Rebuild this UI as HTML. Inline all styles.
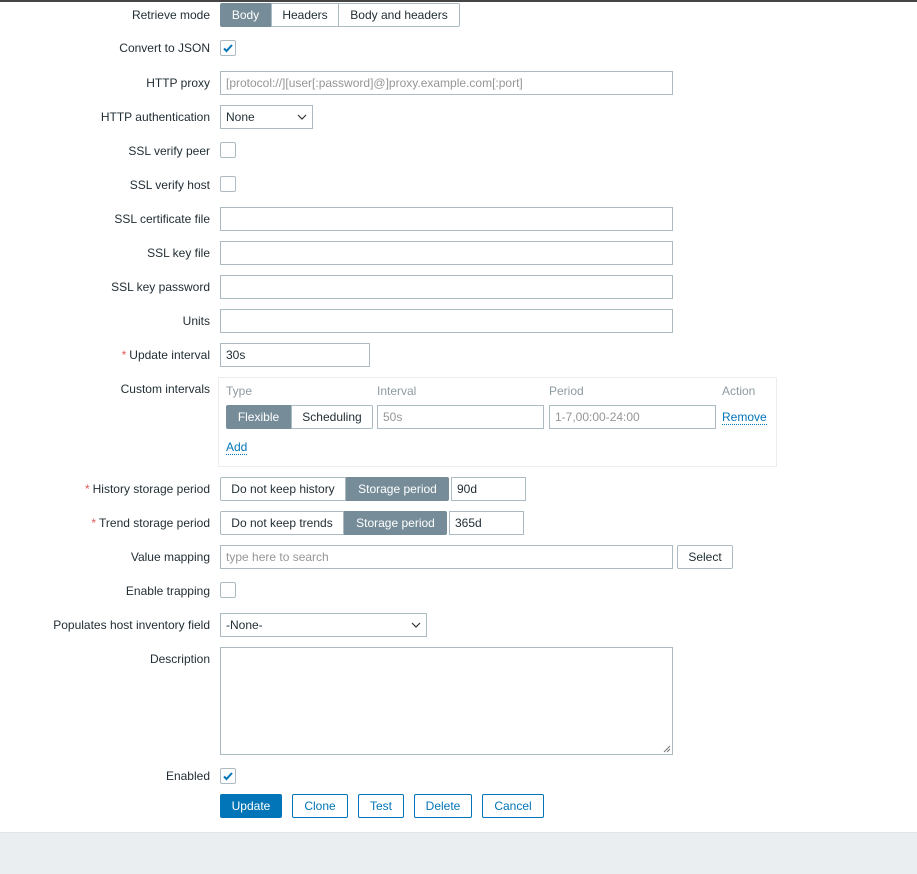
<!DOCTYPE html>
<html><head><meta charset="utf-8"><style>
*{box-sizing:border-box;margin:0;padding:0}
body{width:917px;height:874px;position:relative;background:#fff;font-family:"Liberation Sans",Arial,sans-serif;font-size:12px;color:#1f2c33;overflow:hidden}
.a{position:absolute}
.lbl{position:absolute;right:707px;white-space:nowrap;line-height:14px}
.req{color:#e45959;margin-right:3px}
.inp{position:absolute;height:24px;border:1px solid #acbbc2;background:#fff;padding:0 5px;line-height:22px;white-space:nowrap;overflow:hidden}
.ph{color:#969696}
.cb{position:absolute;left:220px;width:16px;height:16px;border:1px solid #acbbc2;border-radius:2px;background:#fff}
.cb svg{position:absolute;left:1px;top:1px}
.seg{position:absolute;height:24px;border:1px solid #acbbc2;background:#fff;text-align:center;line-height:22px;white-space:nowrap}
.on{background:#768d99;border-color:#768d99;color:#fff}
.btn{position:absolute;top:794px;height:24px;border:1px solid #0275b8;border-radius:2px;color:#0275b8;text-align:center;line-height:22px;background:#fff}
.lnk{color:#0275b8;border-bottom:1px dotted #0275b8}
.hd{position:absolute;top:384px;color:#8d9ba2}
</style></head><body>
<div class="a" style="left:0;top:0;width:917px;height:2px;background:#454545"></div>

<div class="lbl" style="top:8px">Retrieve mode</div>
<div class="seg on" style="left:220px;top:3px;width:51px;border-radius:2px 0 0 2px">Body</div>
<div class="seg" style="left:271px;top:3px;width:68px">Headers</div>
<div class="seg" style="left:338px;top:3px;width:122px;border-radius:0 2px 2px 0">Body and headers</div>

<div class="lbl" style="top:41px">Convert to JSON</div>
<div class="cb" style="top:40px"><svg width="12" height="12" viewBox="0 0 12 12"><path d="M2 6.5l2.5 2.5 5.5-6" stroke="#0275b8" stroke-width="2" fill="none"/></svg></div>

<div class="lbl" style="top:76px">HTTP proxy</div>
<div class="inp ph" style="left:220px;top:71px;width:453px">[protocol://][user[:password]@]proxy.example.com[:port]</div>

<div class="lbl" style="top:110px">HTTP authentication</div>
<div class="inp" style="left:220px;top:105px;width:93px">None<svg class="a" style="left:76px;top:8px" width="10" height="7" viewBox="0 0 10 7"><path d="M1 1l4 4 4-4" stroke="#333" stroke-width="1.2" fill="none"/></svg></div>

<div class="lbl" style="top:144px">SSL verify peer</div>
<div class="cb" style="top:142px"></div>
<div class="lbl" style="top:178px">SSL verify host</div>
<div class="cb" style="top:176px"></div>

<div class="lbl" style="top:212px">SSL certificate file</div>
<div class="inp" style="left:220px;top:207px;width:453px"></div>
<div class="lbl" style="top:246px">SSL key file</div>
<div class="inp" style="left:220px;top:241px;width:453px"></div>
<div class="lbl" style="top:280px">SSL key password</div>
<div class="inp" style="left:220px;top:275px;width:453px"></div>
<div class="lbl" style="top:314px">Units</div>
<div class="inp" style="left:220px;top:309px;width:453px"></div>

<div class="lbl" style="top:348px"><span class="req">*</span>Update interval</div>
<div class="inp" style="left:220px;top:343px;width:150px">30s</div>

<div class="lbl" style="top:382px">Custom intervals</div>
<div class="a" style="left:218px;top:377px;width:559px;height:90px;border:1px solid #ebeef0"></div>
<div class="hd" style="left:226px">Type</div>
<div class="hd" style="left:377px">Interval</div>
<div class="hd" style="left:549px">Period</div>
<div class="hd" style="left:722px">Action</div>
<div class="seg on" style="left:226px;top:405px;width:65px;border-radius:2px 0 0 2px">Flexible</div>
<div class="seg" style="left:291px;top:405px;width:82px;border-radius:0 2px 2px 0">Scheduling</div>
<div class="inp ph" style="left:377px;top:405px;width:167px">50s</div>
<div class="inp ph" style="left:549px;top:405px;width:167px">1-7,00:00-24:00</div>
<div class="a" style="left:722px;top:410px"><span class="lnk">Remove</span></div>
<div class="a" style="left:226px;top:440px"><span class="lnk">Add</span></div>

<div class="lbl" style="top:482px"><span class="req">*</span>History storage period</div>
<div class="seg" style="left:220px;top:477px;width:126px;border-radius:2px 0 0 2px">Do not keep history</div>
<div class="seg on" style="left:346px;top:477px;width:103px;border-radius:0 2px 2px 0">Storage period</div>
<div class="inp" style="left:451px;top:477px;width:75px">90d</div>

<div class="lbl" style="top:516px"><span class="req">*</span>Trend storage period</div>
<div class="seg" style="left:220px;top:511px;width:124px;border-radius:2px 0 0 2px">Do not keep trends</div>
<div class="seg on" style="left:344px;top:511px;width:103px;border-radius:0 2px 2px 0">Storage period</div>
<div class="inp" style="left:449px;top:511px;width:75px">365d</div>

<div class="lbl" style="top:550px">Value mapping</div>
<div class="inp ph" style="left:220px;top:545px;width:453px">type here to search</div>
<div class="seg" style="left:677px;top:545px;width:56px;border-radius:2px">Select</div>

<div class="lbl" style="top:584px">Enable trapping</div>
<div class="cb" style="top:582px"></div>

<div class="lbl" style="top:618px">Populates host inventory field</div>
<div class="inp" style="left:220px;top:613px;width:207px">-None-<svg class="a" style="left:190px;top:8px" width="10" height="7" viewBox="0 0 10 7"><path d="M1 1l4 4 4-4" stroke="#333" stroke-width="1.2" fill="none"/></svg></div>

<div class="lbl" style="top:652px">Description</div>
<div class="inp" style="left:220px;top:647px;width:453px;height:108px"><svg class="a" style="right:1px;bottom:1px" width="8" height="8" viewBox="0 0 8 8"><path d="M7 1L1 7M7 4L4 7" stroke="#777" stroke-width="1"/></svg></div>

<div class="lbl" style="top:769px">Enabled</div>
<div class="cb" style="top:768px"><svg width="12" height="12" viewBox="0 0 12 12"><path d="M2 6.5l2.5 2.5 5.5-6" stroke="#0275b8" stroke-width="2" fill="none"/></svg></div>

<div class="btn" style="left:220px;width:62px;background:#0275b8;color:#fff">Update</div>
<div class="btn" style="left:292px;width:56px">Clone</div>
<div class="btn" style="left:358px;width:46px">Test</div>
<div class="btn" style="left:414px;width:58px">Delete</div>
<div class="btn" style="left:482px;width:62px">Cancel</div>

<div class="a" style="left:0;top:832px;width:917px;height:42px;background:#ebeef0;border-top:1px solid #dfe4e7"></div>
</body></html>
